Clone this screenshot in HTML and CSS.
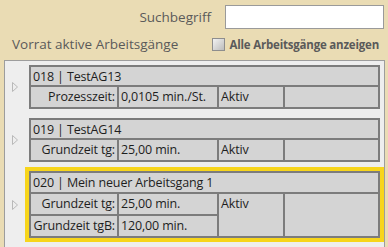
FILE: index.html
```html
<!DOCTYPE html>
<html>
<head>
  <link rel="stylesheet" href="styles.css">
</head>
<body>
  <div class="search-row">
    <label class="search-label" for="search">Suchbegriff</label>
    <input class="search-input" id="search" type="text">
  </div>

  <div class="list-head">
    <span class="list-title">Vorrat aktive Arbeitsgänge</span>
    <label class="show-all"><span class="checkbox"></span>Alle Arbeitsgänge anzeigen</label>
  </div>

  <div class="panel">
    <div class="item">
      <span class="arrow"><svg width="6" height="10" viewBox="0 0 6 10"><polygon points="0.5,0.5 5.5,5 0.5,9.5" fill="none" stroke="#b9b9b9"/></svg></span>
      <div class="frame">
        <div class="card">
          <div class="cell head">018 | TestAG13</div>
          <div class="cell label">Prozesszeit:</div>
          <div class="cell">0,0105 min./St.</div>
          <div class="cell">Aktiv</div>
          <div class="cell"></div>
        </div>
      </div>
    </div>

    <div class="item">
      <span class="arrow"><svg width="6" height="10" viewBox="0 0 6 10"><polygon points="0.5,0.5 5.5,5 0.5,9.5" fill="none" stroke="#b9b9b9"/></svg></span>
      <div class="frame">
        <div class="card">
          <div class="cell head">019 | TestAG14</div>
          <div class="cell label">Grundzeit tg:</div>
          <div class="cell">25,00 min.</div>
          <div class="cell">Aktiv</div>
          <div class="cell"></div>
        </div>
      </div>
    </div>

    <div class="item">
      <span class="arrow"><svg width="6" height="10" viewBox="0 0 6 10"><polygon points="0.5,0.5 5.5,5 0.5,9.5" fill="none" stroke="#b9b9b9"/></svg></span>
      <div class="frame selected">
        <div class="card two-rows">
          <div class="cell head">020 | Mein neuer Arbeitsgang 1</div>
          <div class="cell label">Grundzeit tg:</div>
          <div class="cell">25,00 min.</div>
          <div class="cell tall">Aktiv</div>
          <div class="cell tall"></div>
          <div class="cell label">Grundzeit tgB:</div>
          <div class="cell">120,00 min.</div>
        </div>
      </div>
    </div>
  </div>
</body>
</html>
```

FILE: styles.css
```css
body {
  font-family: "Open Sans", sans-serif;
  margin: 0;
  background: #EADCB4;
  overflow: hidden;
}

.search-row {
  display: flex;
  justify-content: flex-end;
  align-items: center;
  gap: 14px;
  padding: 5px 4px 0 0;
}

.search-label {
  font-size: 13.5px;
  color: #5A5A5A;
}

.search-input {
  box-sizing: border-box;
  width: 159px;
  height: 24px;
  margin: 0;
  border: 1px solid #9A9A9A;
  background: #FFFFFF;
}

.list-head {
  display: flex;
  justify-content: space-between;
  align-items: center;
  height: 20px;
  margin-top: 5px;
  padding: 0 9px 0 12px;
}

.list-title {
  font-size: 13.5px;
  color: #5A5A5A;
}

.show-all {
  display: flex;
  align-items: center;
  gap: 4px;
  font-size: 11.5px;
  font-weight: 700;
  letter-spacing: -0.2px;
  color: #5A5A5A;
}

.checkbox {
  box-sizing: border-box;
  width: 13px;
  height: 13px;
  border: 1px solid #8E8E8E;
  background: linear-gradient(135deg, #F2F2F2, #BCBCBC);
}

.panel {
  box-sizing: border-box;
  width: 381px;
  height: 187px;
  margin: 6px 0 0 4px;
  border: 1px solid #9D9D9D;
  border-bottom: none;
  background: #EEEEEE;
  display: flex;
  flex-direction: column;
  gap: 1px;
}

.item {
  display: flex;
  align-items: center;
}

.arrow {
  width: 20px;
  display: flex;
  justify-content: center;
}

.frame {
  flex: 1;
  border: 4px solid transparent;
}

.frame.selected {
  border-color: #F7D51B;
}

.card {
  display: grid;
  grid-template-columns: 86px 98px 64px 1fr;
  grid-template-rows: 18px 20px;
  gap: 2px;
  border: 2px solid #7C7C7C;
  background: #7C7C7C;
  font-size: 12.5px;
  letter-spacing: -0.15px;
  color: #1E1E1E;
}

.card.two-rows {
  grid-template-rows: 19px 20px 20px;
}

.cell {
  background: #D4D4D4;
  padding: 0 2px;
  line-height: 19px;
  white-space: nowrap;
  overflow: hidden;
}

.cell.head {
  grid-column: 1 / 5;
}

.cell.label {
  text-align: right;
}

.cell.tall {
  grid-row: span 2;
}
```
